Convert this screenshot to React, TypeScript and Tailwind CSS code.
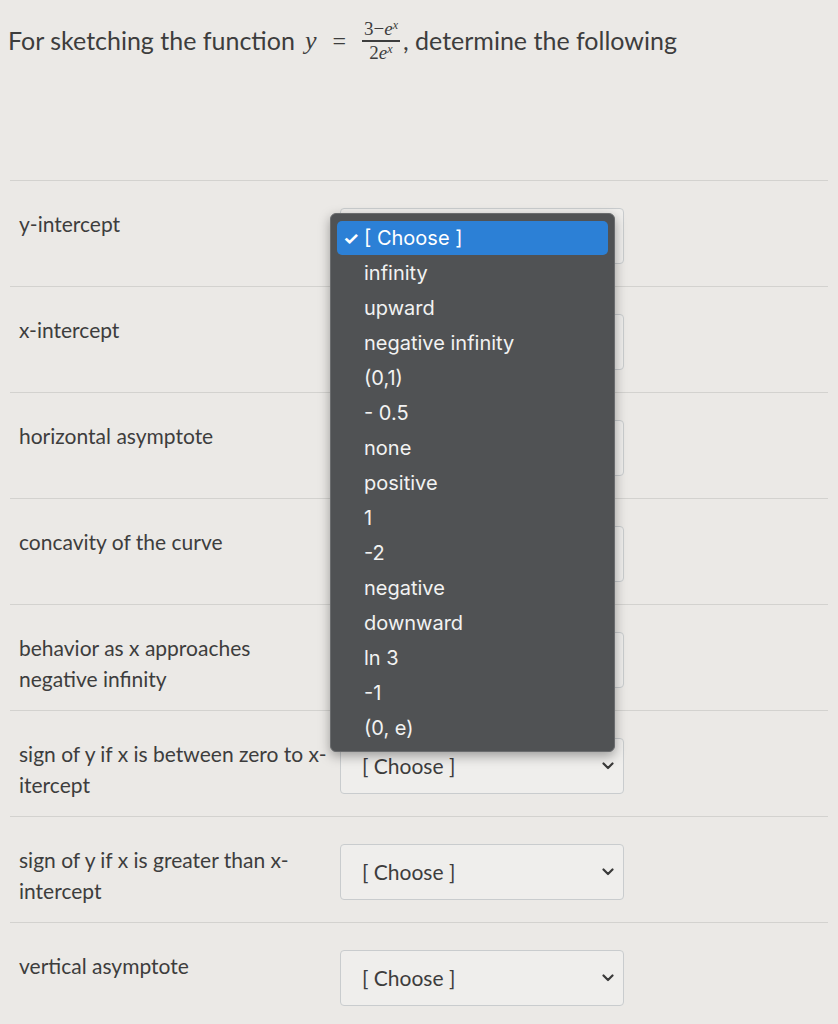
import React from 'react';

const rows: string[][] = [
  ['y-intercept'],
  ['x-intercept'],
  ['horizontal asymptote'],
  ['concavity of the curve'],
  ['behavior as x approaches', 'negative infinity'],
  ['sign of y if x is between zero to x-', 'itercept'],
  ['sign of y if x is greater than x-', 'intercept'],
  ['vertical asymptote'],
];

const options = [
  'infinity',
  'upward',
  'negative infinity',
  '(0,1)',
  '- 0.5',
  'none',
  'positive',
  '1',
  '-2',
  'negative',
  'downward',
  'ln 3',
  '-1',
  '(0, e)',
];

function Chevron() {
  return (
    <svg width="12" height="8" viewBox="0 0 12 8" className="text-[#3a3a3a]">
      <path d="M1.5 1.5 L6 6 L10.5 1.5" fill="none" stroke="currentColor" strokeWidth="2.2" strokeLinecap="round" strokeLinejoin="round" />
    </svg>
  );
}

function SelectBox() {
  return (
    <div className="flex h-[56px] w-[284px] items-center justify-between rounded-[4px] border border-[#c9ccce] bg-[#efeeec] pl-[21px] pr-[9px]">
      <span className="text-[21px] text-[#3d3d3d]">[ Choose ]</span>
      <Chevron />
    </div>
  );
}

function Fraction() {
  return (
    <span className="ml-[16px] mr-[3px] inline-flex flex-col items-center" style={{ fontFamily: '"Liberation Serif", serif' }}>
      <span className="px-[2px] text-[19px] leading-[22px]">
        3−<i>e</i><sup className="text-[12px] italic">x</sup>
      </span>
      <span className="h-[1.5px] w-full bg-[#3d3d3d]" />
      <span className="px-[2px] text-[19px] leading-[22px]">
        2<i>e</i><sup className="text-[12px] italic">x</sup>
      </span>
    </span>
  );
}

export default function App() {
  return (
    <div className="relative min-h-[1024px] w-[838px] overflow-hidden bg-[#ebe9e6] text-[#3d3d3d]" style={{ fontFamily: 'Lato, "Open Sans", sans-serif' }}>
      <div className="h-[180px] pl-[8px] pt-[18px]">
        <p className="flex items-center text-[25px]">
          <span>For sketching the function</span>
          <span className="ml-[10px] text-[26px] italic" style={{ fontFamily: '"Liberation Serif", serif' }}>y</span>
          <span className="ml-[16px] text-[24px]" style={{ fontFamily: '"Liberation Serif", serif' }}>=</span>
          <Fraction />
          <span>, determine the following</span>
        </p>
      </div>

      <div className="mx-[10px]">
        {rows.map((lines, i) => (
          <div key={i} className="flex h-[106px] border-t border-[#d3d2cf]">
            <div className="w-[330px] shrink-0 whitespace-nowrap pl-[9px] pt-[27px] text-[21px] leading-[31px]">
              {lines.map((l, j) => (
                <div key={j}>{l}</div>
              ))}
            </div>
            <div className="pt-[27px]">
              <SelectBox />
            </div>
          </div>
        ))}
      </div>

      <div
        className="absolute left-[330px] top-[213px] w-[285px] rounded-[6px] border border-[#6a6c6e] bg-[#505254] pb-[6px] pt-[7px] shadow-[0_4px_12px_rgba(0,0,0,0.35)]"
        style={{ fontFamily: 'Inter, "Liberation Sans", sans-serif' }}
      >
        <div className="mx-[6px] flex h-[34px] items-center rounded-[5px] bg-[#2c80d6] pl-[6px] text-[20px] text-white">
          <span className="w-[21px] text-[18px] font-bold">✓</span>
          <span>[ Choose ]</span>
        </div>
        {options.map((o) => (
          <div key={o} className="flex h-[35px] items-center pl-[33px] text-[20px] text-[#f2f2f2]">
            {o}
          </div>
        ))}
      </div>
    </div>
  );
}
